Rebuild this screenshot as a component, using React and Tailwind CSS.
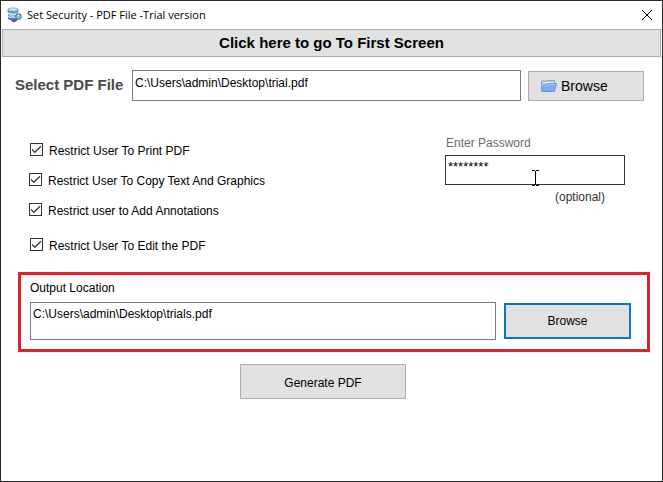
import { useState } from "react";

const RESTRICTIONS = [
    { id: "print", label: "Restrict User To Print PDF", spacing: "pl-px" },
    {
        id: "copy",
        label: "Restrict User To Copy Text And Graphics",
        spacing: "mt-3",
    },
    {
        id: "annotate",
        label: "Restrict user to Add Annotations",
        spacing: "mt-3",
    },
    {
        id: "edit",
        label: "Restrict User To Edit the PDF",
        spacing: "mt-[17px] pl-px",
    },
];

function AppIcon() {
    return (
        <svg className="size-4 shrink-0" viewBox="0 0 16 16" aria-hidden="true">
            <path d="M3 11.500h8l-1.500 2.500-2.500 1.500-2.500-1.500z" fill="#7b3f86" />
            <path
                d="M1 2.500c0-2 10-2 10 0v2.500c0 1.500-10 1.500-10 0z"
                fill="#5fa3cf"
                stroke="#33749f"
                strokeWidth=".6"
            />
            <ellipse cx="6" cy="2.500" rx="4.400" ry="1.200" fill="#cfe8f5" />
            <path
                d="M1.500 7c0 1.600 10 1.600 11 0v2c-1 1.600-11 1.600-11 0z"
                fill="#b5daee"
                stroke="#3d7fac"
                strokeWidth=".6"
            />
            <path
                d="M1 9.500c0 2 8 2.500 9.500 1v2c-2 1.500-9.500.8-9.500-1z"
                fill="#3f78ad"
            />
            <circle
                cx="11.500"
                cy="9.500"
                r="2.600"
                fill="#d9edf8"
                stroke="#3480b8"
                strokeWidth="1.200"
            />
            <path
                d="m10.500 9.500 1 1 1.500-2"
                fill="none"
                stroke="#3480b8"
            />
        </svg>
    );
}

function FolderIcon() {
    return (
        <svg
            className="h-3 w-4 shrink-0"
            viewBox="0 0 16 12"
            aria-hidden="true"
        >
            <path
                d="M.5 11V1h5l1-.5h7V4"
                fill="#a9c8f2"
                stroke="#7da4dd"
            />
            <path d="M2 2.500h10.500" stroke="#eaf3ff" />
            <path
                d="M.7 11.500 2.500 5.500l3.500-.5 1-1.500h8.500l-2 8z"
                fill="#7eabee"
                stroke="#6795dc"
            />
            <path d="m3.500 6.500 3-.4 1-1.600h6.800" fill="none" stroke="#a9cbfb" />
        </svg>
    );
}

function TextCursor() {
    return (
        <svg
            className="pointer-events-none absolute top-4 left-[86px] h-4 w-2"
            viewBox="0 0 8 16"
            aria-hidden="true"
            shapeRendering="crispEdges"
        >
            <path
                d="M1 .5h3m1 0h3M4.500 1v14M1 15.500h3m1 0h3"
                stroke="#000"
                fill="none"
            />
        </svg>
    );
}

function CheckRow({ id, label, spacing }) {
    const [checked, setChecked] = useState(true);

    return (
        <div className={spacing}>
            <label
                htmlFor={id}
                className="flex h-[18px] items-center gap-[6px] text-xs"
            >
                <span className="grid size-[13px] shrink-0">
                    <input
                        id={id}
                        type="checkbox"
                        checked={checked}
                        onChange={(e) => setChecked(e.target.checked)}
                        className="peer col-start-1 row-start-1 size-[13px] appearance-none border border-[#333] bg-white"
                    />
                    <svg
                        className="pointer-events-none invisible col-start-1 row-start-1 size-[13px] peer-checked:visible"
                        viewBox="0 0 13 13"
                        aria-hidden="true"
                    >
                        <path
                            d="M2 6.500 4.800 9.300 11 3.200"
                            fill="none"
                            stroke="#333"
                            strokeWidth="1.200"
                        />
                    </svg>
                </span>
                <span className="pt-1">{label}</span>
            </label>
        </div>
    );
}

export default function App() {
    const [source, setSource] = useState("C:\\Users\\admin\\Desktop\\trial.pdf");
    const [output, setOutput] = useState(
        "C:\\Users\\admin\\Desktop\\trials.pdf",
    );
    const [password, setPassword] = useState("********");

    return (
        <div className="min-h-screen border border-[#2b292c] bg-white font-['Liberation_Sans',Arial,sans-serif] text-black">
            {/* Title bar */}
            <header className="flex h-7 items-center gap-1 pr-[9px] pl-[6px]">
                <AppIcon />
                <h1 className="flex-1 font-['Open_Sans','Noto_Sans',sans-serif] text-[11px]">
                    Set Security - PDF File -Trial version
                </h1>
                <button type="button" aria-label="Close">
                    <svg
                        className="size-3"
                        viewBox="0 0 12 12"
                        aria-hidden="true"
                    >
                        <path d="m1 1 10 10M11 1 1 11" stroke="#000" />
                    </svg>
                </button>
            </header>

            <main>
                <div className="px-px">
                    <button
                        type="button"
                        className="h-7 w-full border border-[#adadad] bg-[#e1e1e1] text-[15px] font-bold"
                    >
                        Click here to go To First Screen
                    </button>
                </div>

                {/* Source file */}
                <div className="mt-[13px] flex items-center pr-[18px] pl-[14px]">
                    <label
                        htmlFor="source"
                        className="w-[117px] shrink-0 text-[15px] font-bold text-[#4a4a4a]"
                    >
                        Select PDF File
                    </label>
                    <input
                        id="source"
                        type="text"
                        value={source}
                        onChange={(e) => setSource(e.target.value)}
                        className="h-[31px] min-w-0 flex-1 border border-[#7a7a7a] px-[2px] pb-[6px] text-xs"
                    />
                    <button
                        type="button"
                        className="ml-[7px] flex h-[30px] w-[116px] shrink-0 items-center gap-1 border border-[#adadad] bg-[#e1e1e1] pl-3 text-sm"
                    >
                        <FolderIcon />
                        Browse
                    </button>
                </div>

                {/* Restrictions and password */}
                <div className="mt-[33px] flex items-start justify-between pr-[37px] pl-7">
                    <div className="mt-[6px]">
                        {RESTRICTIONS.map((item) => (
                            <CheckRow key={item.id} {...item} />
                        ))}
                    </div>
                    <div className="flex w-[180px] flex-col">
                        <label
                            htmlFor="password"
                            className="pl-px text-xs leading-[18px] text-[#6d6d6d]"
                        >
                            Enter Password
                        </label>
                        <div className="relative mt-[2px]">
                            <input
                                id="password"
                                type="text"
                                value={password}
                                onChange={(e) => setPassword(e.target.value)}
                                className="h-[30px] w-full border border-[#333] px-[2px] pb-[6px] text-[13px]"
                            />
                            <TextCursor />
                        </div>
                        <span className="mt-[3px] pr-5 text-right text-xs leading-[18px] text-[#333]">
                            (optional)
                        </span>
                    </div>
                </div>

                {/* Output location */}
                <section className="mt-[19px] mr-3 ml-[17px] border-3 border-[#dc2430] pt-1 pr-4 pb-[9px] pl-[9px]">
                    <label
                        htmlFor="output"
                        className="block text-xs leading-[18px]"
                    >
                        Output Location
                    </label>
                    <div className="mt-[5px] flex items-center gap-2">
                        <input
                            id="output"
                            type="text"
                            value={output}
                            onChange={(e) => setOutput(e.target.value)}
                            className="h-[38px] min-w-0 flex-1 border border-[#7a7a7a] px-[2px] pb-[14px] text-xs"
                        />
                        <button
                            type="button"
                            className="h-9 w-[127px] shrink-0 border-2 border-[#0f76bd] bg-[#e1e1e1] text-xs"
                        >
                            Browse
                        </button>
                    </div>
                </section>

                <div className="mt-3 flex justify-center pr-[17px]">
                    <button
                        type="button"
                        className="h-[35px] w-[166px] border border-[#adadad] bg-[#e1e1e1] pt-[2px] text-xs"
                    >
                        Generate PDF
                    </button>
                </div>
            </main>
        </div>
    );
}
